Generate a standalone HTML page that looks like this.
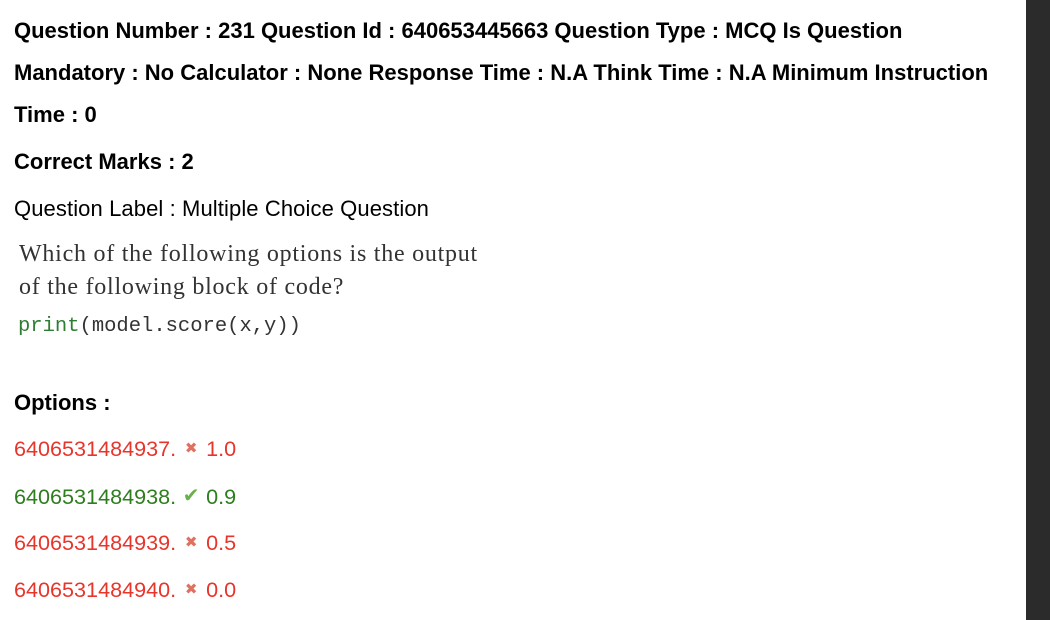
<!DOCTYPE html>
<html><head><style>
body{margin:0;width:1050px;height:620px;background:#fff;overflow:hidden;position:relative;font-family:"Liberation Sans",sans-serif;color:#000}
.bar{position:absolute;left:1026px;top:0;width:24px;height:620px;background:#2b2b2b}
.t{position:absolute;left:14px;white-space:nowrap;font-size:22px;line-height:24px}
.b{font-weight:bold}
.s{font-family:"Liberation Serif",serif;font-size:24px;letter-spacing:0.75px;color:#333;left:19px}
.m{font-family:"Liberation Mono",monospace;font-size:20.5px;color:#333;left:18px}
.r{color:#e8352b;font-size:21.6px}.g{color:#2e7d1f;font-size:21.6px}
.ic{display:inline-block;width:30px;text-align:center;font-size:15px;vertical-align:3px}
</style></head><body>
<div class="bar"></div>
<div class="t b" style="top:19px">Question Number : 231 Question Id : 640653445663 Question Type : MCQ Is Question</div>
<div class="t b" style="top:61px">Mandatory : No Calculator : None Response Time : N.A Think Time : N.A Minimum Instruction</div>
<div class="t b" style="top:103px">Time : 0</div>
<div class="t b" style="top:150px">Correct Marks : 2</div>
<div class="t" style="top:197px;letter-spacing:0.1px">Question Label : Multiple Choice Question</div>
<div class="t s" style="top:242px">Which of the following options is the output</div>
<div class="t s" style="top:275px">of the following block of code?</div>
<div class="t m" style="top:315px"><span style="color:#2e7d32">print</span>(model.score(x,y))</div>
<div class="t b" style="top:391px">Options :</div>
<div class="t r" style="top:437px">6406531484937.<span class="ic" style="color:#e07060">✖</span>1.0</div>
<div class="t g" style="top:484px">6406531484938.<span class="ic" style="color:#6ab04c;font-size:20px;vertical-align:2px">✔</span>0.9</div>
<div class="t r" style="top:531px">6406531484939.<span class="ic" style="color:#e07060">✖</span>0.5</div>
<div class="t r" style="top:578px">6406531484940.<span class="ic" style="color:#e07060">✖</span>0.0</div>
</body></html>
